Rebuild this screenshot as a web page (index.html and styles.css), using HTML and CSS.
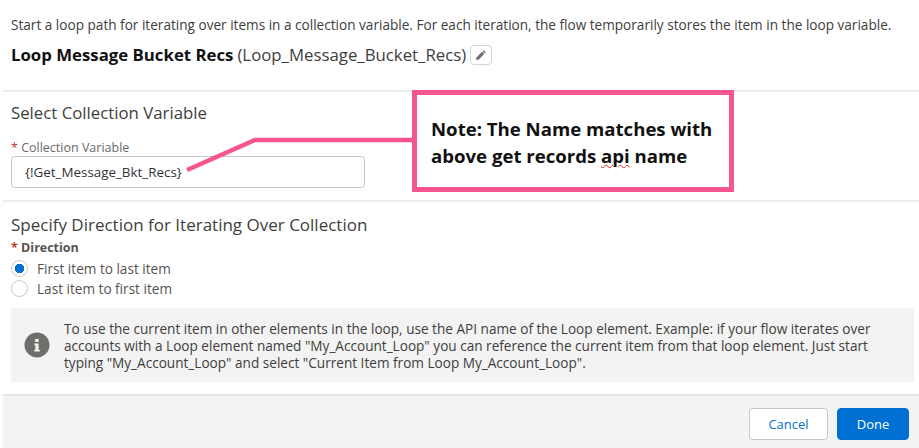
FILE: index.html

```html
<!DOCTYPE html>
<html lang="en">
<head>
  <meta charset="UTF-8" />
  <title>Loop Element</title>
  <link rel="stylesheet" href="styles.css">
</head>
<body>
  <div class="intro">
    <p class="desc">Start a loop path for iterating over items in a collection variable. For each iteration, the flow temporarily stores the item in the loop variable.</p>
    <div class="title">
      <b>Loop Message Bucket Recs</b> <span>(Loop_Message_Bucket_Recs)</span>
      <button class="edit" aria-label="Edit">
        <svg width="12" height="12" viewBox="0 0 12 12"><path d="M8.6 1.2l2.2 2.2-1 1-2.2-2.2zM7 2.8l2.2 2.2-5.4 5.4-2.9.7.7-2.9z" fill="#706e6b"/></svg>
      </button>
    </div>
  </div>

  <section class="section first">
    <h2>Select Collection Variable</h2>
    <label class="label"><i>*</i> Collection Variable</label>
    <div class="input">{!Get_Message_Bkt_Recs}</div>
  </section>

  <section class="section second">
    <h2>Specify Direction for Iterating Over Collection</h2>
    <div class="label strong"><i>*</i> Direction</div>
    <div class="radio"><span class="dot on"></span>First item to last item</div>
    <div class="radio"><span class="dot"></span>Last item to first item</div>
    <div class="notice">
      <svg class="info" width="26" height="26" viewBox="0 0 26 26"><circle cx="13" cy="13" r="12.5" fill="#706e6b"/><path d="M11.2 7h3.4v3h-3.4zM10.4 11.6h4.2v6.2h1.2v1.6h-5.6v-1.6h1.2v-4.6h-1z" fill="#f3f3f3"/></svg>
      <p>To use the current item in other elements in the loop, use the API name of the Loop element. Example: if your flow iterates over accounts with a Loop element named "My_Account_Loop" you can reference the current item from that loop element. Just start typing "My_Account_Loop" and select "Current Item from Loop My_Account_Loop".</p>
    </div>
  </section>

  <footer class="footer">
    <button class="btn cancel">Cancel</button>
    <button class="btn done">Done</button>
  </footer>

  <!-- annotation pasted on top of the screenshot -->
  <svg class="pointer" width="240" height="90" viewBox="0 0 240 90"><path d="M187 170L255 140H414" transform="translate(-180 -100)" fill="none" stroke="#f75590" stroke-width="4.5"/></svg>
  <div class="note">
    <div>Note: The Name matches with</div>
    <div>above get records <span class="typo">api</span> name</div>
  </div>
</body>
</html>
```

FILE: styles.css

```css
* {
  box-sizing: border-box;
}

body {
  margin: 0;
  height: 448px;
  overflow: hidden;
  background: #fff;
  color: #3e3e3c;
  font-family: 'Open Sans', sans-serif;
  font-size: 13.6px;
  position: relative;
}

p {
  margin: 0;
}

.intro {
  height: 90px;
  padding: 16px 11px 0;
}

.desc {
  line-height: 18px;
  white-space: nowrap;
}

.title {
  display: flex;
  align-items: center;
  gap: 4px;
  margin-top: 9px;
  font-size: 16.8px;
  line-height: 24px;
  white-space: nowrap;
}

.title b {
  color: #111;
}

.edit {
  width: 22px;
  height: 20px;
  padding: 0;
  background: #fff;
  border: 1px solid #d4d4d4;
  border-radius: 4px;
  display: flex;
  align-items: center;
  justify-content: center;
}

.section {
  margin-left: 3px;
  padding: 0 5px 0 8px;
  border-top: 2px solid #ececec;
}

.first {
  height: 110px;
  padding-top: 11px;
}

.second {
  height: 194px;
  padding-top: 13px;
}

h2 {
  margin: 0;
  font-size: 16.8px;
  font-weight: 400;
  line-height: 20px;
  color: #3e3e3c;
}

.second h2 {
  font-size: 17px;
}

.label {
  display: block;
  margin-top: 17px;
  font-size: 12.5px;
  line-height: 16px;
  color: #6b6967;
}

.label i {
  color: #c23934;
  font-style: normal;
}

.label.strong {
  margin-top: 5px;
  font-weight: 700;
  color: #55534f;
}

.input {
  width: 354px;
  height: 32px;
  margin-top: 0;
  padding: 0 13px;
  border: 1px solid #c9c7c5;
  border-radius: 4px;
  font-size: 13.4px;
  line-height: 30px;
  color: #333;
}

.radio {
  display: flex;
  align-items: center;
  gap: 9px;
  height: 20px;
  color: #55534f;
}

.label.strong + .radio {
  margin-top: 2px;
}

.dot {
  width: 17px;
  height: 17px;
  border: 1px solid #c9c7c5;
  border-radius: 50%;
  background: #fff;
}

.dot.on {
  background: radial-gradient(circle, #0070d2 0 4.5px, #fff 5px);
}

.notice {
  display: flex;
  align-items: center;
  gap: 14px;
  width: 903px;
  height: 74px;
  margin-top: 10px;
  padding: 0 12px 0 13px;
  background: #f3f3f3;
  line-height: 17px;
}

.info {
  flex: none;
}

.footer {
  display: flex;
  justify-content: flex-end;
  gap: 9px;
  height: 54px;
  margin-left: 3px;
  padding: 12px 10px 0 0;
  background: #f3f3f3;
  border-top: 2px solid #e5e5e5;
}

.btn {
  height: 32px;
  border-radius: 4px;
  border: 1px solid #c9c7c5;
  font-family: inherit;
  font-size: 13px;
}

.cancel {
  width: 79px;
  background: #fff;
  color: #0070d2;
}

.done {
  width: 72px;
  background: #0070d2;
  border-color: #0070d2;
  color: #fff;
}

.pointer {
  position: absolute;
  left: 180px;
  top: 100px;
}

.note {
  position: absolute;
  left: 412px;
  top: 90px;
  width: 322px;
  height: 102px;
  padding: 20px 14px 0;
  background: #fff;
  border: 5px solid #f75590;
  font-size: 18.6px;
  font-weight: 700;
  line-height: 27px;
  white-space: nowrap;
  color: #111;
}

.typo {
  text-decoration: underline wavy #e02020 1px;
}
```
